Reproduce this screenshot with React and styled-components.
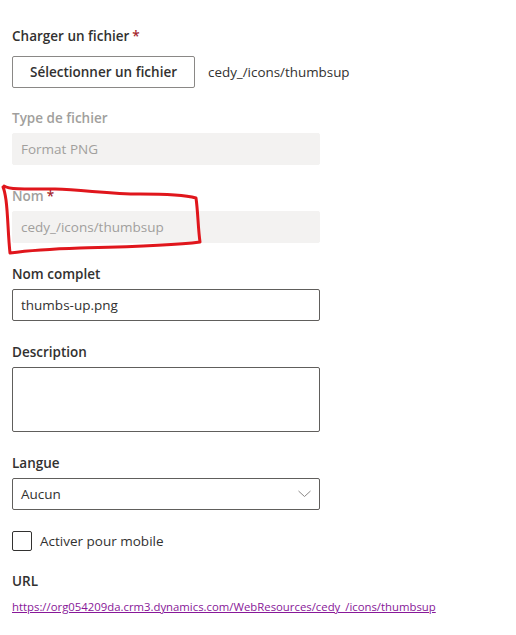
import React from "react";
import styled, { createGlobalStyle } from "styled-components";

const Global = createGlobalStyle`
  html, body {
    margin: 0;
    background: #ffffff;
  }
  body {
    font-family: "Open Sans", "Liberation Sans", sans-serif;
    color: #323130;
  }
`;

const Page = styled.div`
  position: relative;
  width: 516px;
  height: 635px;
  padding: 21px 12px 0;
  box-sizing: border-box;
  display: flex;
  flex-direction: column;
`;

const Group = styled.div`
  display: flex;
  flex-direction: column;
  margin-bottom: ${(p) => p.$gap ?? 16}px;
`;

const Label = styled.div`
  font-size: 13.5px;
  font-weight: 600;
  line-height: 20px;
  padding: 5px 0;
  color: ${(p) => (p.$disabled ? "#a19f9d" : "#323130")};
`;

const Required = styled.span`
  color: #a4262c;
  margin-left: 3px;
`;

const UploadRow = styled.div`
  display: flex;
  align-items: center;
  gap: 13px;
  margin-top: 5px;
`;

const Button = styled.button`
  height: 32px;
  width: 183px;
  padding: 0 16px;
  border: 1px solid #8a8886;
  border-radius: 2px;
  background: #ffffff;
  font-family: inherit;
  font-size: 13.5px;
  font-weight: 600;
  color: #323130;
`;

const FileName = styled.span`
  font-size: 13.4px;
  color: #323130;
`;

const Field = styled.div`
  width: 308px;
  height: ${(p) => p.$height ?? 32}px;
  box-sizing: border-box;
  display: flex;
  align-items: center;
  justify-content: space-between;
  padding: 0 8px;
  font-size: 13.5px;
  border-radius: 2px;
  border: 1px solid ${(p) => (p.$disabled ? "#f3f2f1" : "#605e5c")};
  background: ${(p) => (p.$disabled ? "#f3f2f1" : "#ffffff")};
  color: ${(p) => (p.$disabled ? "#a19f9d" : "#323130")};
`;

const CheckRow = styled.label`
  display: flex;
  align-items: center;
  gap: 8px;
  margin: 21px 0 15px;
  font-size: 13.5px;
  color: #323130;
`;

const Box = styled.span`
  width: 20px;
  height: 20px;
  box-sizing: border-box;
  border: 1px solid #323130;
  border-radius: 2px;
`;

const Link = styled.a`
  font-size: 11.35px;
  color: #881798;
  text-decoration: underline;
  margin-top: 3px;
`;

const Scribble = styled.svg`
  position: absolute;
  left: 0;
  top: 0;
  pointer-events: none;
`;

const Chevron = () => (
  <svg width="13" height="8" viewBox="0 0 13 8">
    <polyline points="0.5,1 6.5,6.5 12.5,1" fill="none" stroke="#8a8886" strokeWidth="1" />
  </svg>
);

export default function App() {
  return (
    <>
      <Global />
      <Page>
        <Group $gap={15}>
          <Label>
            Charger un fichier<Required>*</Required>
          </Label>
          <UploadRow>
            <Button>Sélectionner un fichier</Button>
            <FileName>cedy_/icons/thumbsup</FileName>
          </UploadRow>
        </Group>

        <Group>
          <Label $disabled>Type de fichier</Label>
          <Field $disabled>Format PNG</Field>
        </Group>

        <Group>
          <Label $disabled>
            Nom<Required>*</Required>
          </Label>
          <Field $disabled>cedy_/icons/thumbsup</Field>
        </Group>

        <Group>
          <Label>Nom complet</Label>
          <Field>thumbs-up.png</Field>
        </Group>

        <Group>
          <Label>Description</Label>
          <Field $height={65} />
        </Group>

        <Group $gap={0}>
          <Label>Langue</Label>
          <Field>
            Aucun
            <Chevron />
          </Field>
        </Group>

        <CheckRow>
          <Box />
          Activer pour mobile
        </CheckRow>

        <Group $gap={0}>
          <Label>URL</Label>
          <Link href="#">
            https://org054209da.crm3.dynamics.com/WebResources/cedy_/icons/thumbsup
          </Link>
        </Group>

        <Scribble width="210" height="260" viewBox="0 0 210 260">
          <path
            d="M4 186 C 10 190, 30 189, 55 189 C 85 190, 110 194, 140 194 C 165 194, 185 195, 196 198
               C 198 212, 198 228, 200 242 C 170 246, 120 247, 80 248 C 50 249, 25 251, 10 253
               C 8 235, 8 215, 6 200 C 5 193, 4 189, 3 187"
            fill="none"
            stroke="#e0161c"
            strokeWidth="3"
            strokeLinecap="round"
            strokeLinejoin="round"
          />
        </Scribble>
      </Page>
    </>
  );
}
